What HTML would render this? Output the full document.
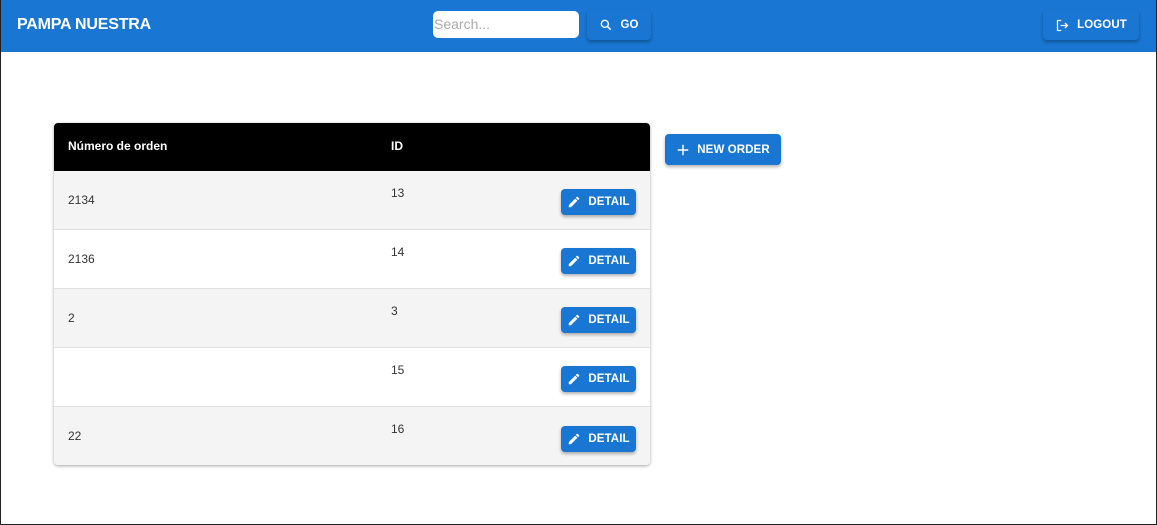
<!DOCTYPE html>
<html><head><meta charset="utf-8"><style>
*{box-sizing:border-box;margin:0;padding:0}
body{width:1157px;height:525px;overflow:hidden;font-family:"Liberation Sans",sans-serif;background:#fff;position:relative}
.frame{position:absolute;inset:0;border:1px solid #222;border-top:none;pointer-events:none}
.hdr{position:absolute;left:0;top:0;width:1157px;height:52px;background:#1976d2}
.title{position:absolute;left:17px;top:16px;color:#fff;font-weight:bold;font-size:16px;letter-spacing:-0.2px}
.search{position:absolute;left:433px;top:11px;width:146px;height:27px;background:#fff;border-radius:5px;color:#aaa;font-size:14px;line-height:27px;padding-left:1px}
.btn{position:absolute;background:#1976d2;color:#fff;font-weight:bold;font-size:11.5px;border-radius:4px;box-shadow:0 2px 3px rgba(0,0,0,.3);display:flex;align-items:center;justify-content:center;gap:7px;letter-spacing:.1px}
.tbl{position:absolute;left:54px;top:123px;width:596px;height:342px;box-shadow:0 1px 3px rgba(0,0,0,.35);border-radius:4px;overflow:hidden}
.th{height:48px;background:#000;color:#fff;font-weight:bold;font-size:12px;position:relative}
.row{height:59px;position:relative;border-bottom:1px solid #e0e0e0;font-size:12px;color:#333}
.row:nth-child(even){background:#f4f4f4}
.c1{position:absolute;left:14px}.c2{position:absolute;left:337px}
</style></head><body>
<div class="hdr">
<div class="title">PAMPA NUESTRA</div>
<div class="search">Search...</div>
<div class="btn" style="left:587px;top:10px;width:64px;height:30px"><svg width="14" height="14" viewBox="0 0 24 24"><circle cx="10" cy="10" r="6" fill="none" stroke="#fff" stroke-width="2.4"/><path d="M14.5 14.5L20 20" stroke="#fff" stroke-width="2.6"/></svg>GO</div>
<div class="btn" style="left:1043px;top:10px;width:96px;height:30px"><svg width="15" height="15" viewBox="0 0 24 24"><path d="M10 4H4v16h6" fill="none" stroke="#fff" stroke-width="2"/><path d="M9 12h11M16 8l4 4-4 4" fill="none" stroke="#fff" stroke-width="2"/></svg>LOGOUT</div>
</div>
<div class="tbl">
<div class="th"><span class="c1" style="top:16px">Número de orden</span><span class="c2" style="top:16px">ID</span></div>
<div class="row"><span class="c1" style="top:22px">2134</span><span class="c2" style="top:15px">13</span></div>
<div class="row"><span class="c1" style="top:22px">2136</span><span class="c2" style="top:15px">14</span></div>
<div class="row"><span class="c1" style="top:22px">2</span><span class="c2" style="top:15px">3</span></div>
<div class="row"><span class="c2" style="top:15px">15</span></div>
<div class="row" style="border:none"><span class="c1" style="top:22px">22</span><span class="c2" style="top:15px">16</span></div>
</div>
<div class="btn" style="left:665px;top:134px;width:116px;height:31px"><svg width="14" height="14" viewBox="0 0 24 24"><path d="M12 3v18M3 12h18" stroke="#fff" stroke-width="2.4"/></svg>NEW ORDER</div>
<div class="btn" style="left:561px;top:189px;width:75px;height:26px"><svg width="14" height="14" viewBox="0 0 24 24"><path d="M3 17.25V21h3.75L17.8 9.94l-3.75-3.75zM20.7 7.04a1 1 0 000-1.41l-2.34-2.34a1 1 0 00-1.41 0l-1.830 1.83 3.75 3.75z" fill="#fff"/></svg>DETAIL</div>
<div class="btn" style="left:561px;top:248px;width:75px;height:26px"><svg width="14" height="14" viewBox="0 0 24 24"><path d="M3 17.25V21h3.75L17.8 9.94l-3.75-3.75zM20.7 7.04a1 1 0 000-1.41l-2.34-2.34a1 1 0 00-1.41 0l-1.83 1.83 3.75 3.75z" fill="#fff"/></svg>DETAIL</div>
<div class="btn" style="left:561px;top:307px;width:75px;height:26px"><svg width="14" height="14" viewBox="0 0 24 24"><path d="M3 17.25V21h3.75L17.8 9.94l-3.75-3.75zM20.7 7.04a1 1 0 000-1.41l-2.34-2.34a1 1 0 00-1.41 0l-1.83 1.83 3.75 3.75z" fill="#fff"/></svg>DETAIL</div>
<div class="btn" style="left:561px;top:366px;width:75px;height:26px"><svg width="14" height="14" viewBox="0 0 24 24"><path d="M3 17.25V21h3.75L17.8 9.94l-3.75-3.75zM20.7 7.04a1 1 0 000-1.41l-2.34-2.34a1 1 0 00-1.41 0l-1.83 1.83 3.75 3.75z" fill="#fff"/></svg>DETAIL</div>
<div class="btn" style="left:561px;top:426px;width:75px;height:26px"><svg width="14" height="14" viewBox="0 0 24 24"><path d="M3 17.25V21h3.75L17.8 9.94l-3.75-3.75zM20.7 7.04a1 1 0 000-1.41l-2.34-2.34a1 1 0 00-1.41 0l-1.83 1.83 3.75 3.75z" fill="#fff"/></svg>DETAIL</div>
<div class="frame"></div>
</body></html>
